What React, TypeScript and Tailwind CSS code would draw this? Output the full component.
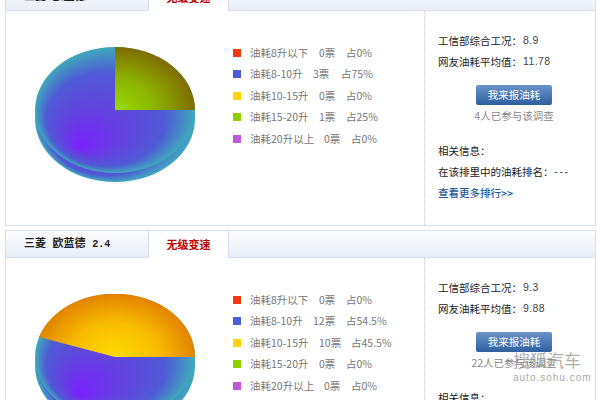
const CJK = "font-['Noto_Sans_CJK_SC','Liberation_Sans',sans-serif]";
const NUM = "font-['Liberation_Sans',sans-serif] text-[10.5px] tracking-[0.4px] text-[#444]";

type Row = { color: string; label: string; votes: string; pct: string; g1: string; g2: string };

const rows1: Row[] = [
  { color: "bg-[#f23a10]", label: "油耗8升以下", votes: "0票", pct: "占0%", g1: "w-[69px]", g2: "w-[27px]" },
  { color: "bg-[#4c5fd8]", label: "油耗8-10升", votes: "3票", pct: "占75%", g1: "w-[63px]", g2: "w-[28px]" },
  { color: "bg-[#ffd200]", label: "油耗10-15升", votes: "0票", pct: "占0%", g1: "w-[69px]", g2: "w-[27px]" },
  { color: "bg-[#8fd000]", label: "油耗15-20升", votes: "1票", pct: "占25%", g1: "w-[69px]", g2: "w-[27px]" },
  { color: "bg-[#c458dc]", label: "油耗20升以上", votes: "0票", pct: "占0%", g1: "w-[74px]", g2: "w-[27px]" },
];
const rows2: Row[] = [
  { color: "bg-[#f23a10]", label: "油耗8升以下", votes: "0票", pct: "占0%", g1: "w-[69px]", g2: "w-[27px]" },
  { color: "bg-[#4c5fd8]", label: "油耗8-10升", votes: "12票", pct: "占54.5%", g1: "w-[63px]", g2: "w-[33px]" },
  { color: "bg-[#ffd200]", label: "油耗10-15升", votes: "10票", pct: "占45.5%", g1: "w-[69px]", g2: "w-[32px]" },
  { color: "bg-[#8fd000]", label: "油耗15-20升", votes: "0票", pct: "占0%", g1: "w-[69px]", g2: "w-[27px]" },
  { color: "bg-[#c458dc]", label: "油耗20升以上", votes: "0票", pct: "占0%", g1: "w-[74px]", g2: "w-[27px]" },
];

function Defs({ id }: { id: string }) {
  return (
    <defs>
      <radialGradient id={`${id}b`} cx="0.5" cy="0.5" r="0.5" fx="0.27" fy="0.8">
        <stop offset="0" stopColor="#7a22fc" />
        <stop offset="0.4" stopColor="#6244de" />
        <stop offset="0.74" stopColor="#4f5ad6" />
        <stop offset="1" stopColor="#3fa8bc" />
      </radialGradient>
      <radialGradient id={`${id}g`} gradientUnits="userSpaceOnUse" cx="0" cy="0" r="1" gradientTransform="translate(81 63) scale(80 63)">
        <stop offset="0" stopColor="#98dc00" />
        <stop offset="0.5" stopColor="#8cb400" />
        <stop offset="1" stopColor="#806c00" />
      </radialGradient>
      <radialGradient id={`${id}y`} gradientUnits="userSpaceOnUse" cx="0" cy="0" r="1" gradientTransform="translate(81 63) scale(80 63)">
        <stop offset="0" stopColor="#ffdc00" />
        <stop offset="0.55" stopColor="#f8bc00" />
        <stop offset="1" stopColor="#e28400" />
      </radialGradient>
    </defs>
  );
}

function Pie({ id, kind }: { id: string; kind: "a" | "b" }) {
  return (
    <svg width="162" height="136" viewBox="0 0 162 136" className="block">
      <Defs id={id} />
      <ellipse cx="81" cy="72" rx="80" ry="63" fill={`url(#${id}b)`} />
      <ellipse cx="81" cy="63" rx="80" ry="63" fill={`url(#${id}b)`} />
      {kind === "a" ? (
        <path d="M81 63 V0 A80 63 0 0 1 161 63 Z" fill={`url(#${id}g)`} />
      ) : (
        <path d="M81 63 H161 A80 63 0 0 0 5 43 Z" fill={`url(#${id}y)`} />
      )}
    </svg>
  );
}

function Card({ title, ver, rows, kind, id, a, b, count, top }: { title: string; ver: string; rows: Row[]; kind: "a" | "b"; id: string; a: string; b: string; count: string; top: string }) {
  return (
    <section className={`${top} mx-[5px] w-[591px] shrink-0 border border-[#d5e0f0] bg-white flex flex-col`}>
      <div className="h-[27px] shrink-0 flex bg-gradient-to-b from-[#fdfdff] to-[#e8edf7] border-b border-[#d6deef]">
        <div className="w-[143px] border-r border-[#d0d8e8] pl-[18px] pt-px flex items-center font-['Liberation_Mono','Noto_Sans_CJK_SC',monospace] font-bold text-[11px] text-[#222] whitespace-pre">
          {title} <span className="text-[10px]">{ver}</span>
        </div>
        <div className="w-[80px] -mb-px bg-white border-r border-[#d6deef] flex items-center justify-center text-[11px] font-bold text-[#c00000] font-['Noto_Sans_CJK_SC',sans-serif]">
          无级变速
        </div>
      </div>
      <div className="flex-1 flex min-h-0">
        <div className="w-[418px] shrink-0 flex pt-[36px] pl-[28px]">
          <Pie id={id} kind={kind} />
          <div className={`ml-[37px] mt-[-5px] flex flex-col text-[10.5px] text-[#777] ${CJK}`}>
            {rows.map((r) => (
              <div key={r.label} className="h-[21.5px] flex items-center">
                <span className={`w-2 h-2 mr-[9px] ${r.color}`} />
                <span className={r.g1}>{r.label}</span>
                <span className={r.g2}>{r.votes}</span>
                <span>{r.pct}</span>
              </div>
            ))}
          </div>
        </div>
        <div className={`flex-1 border-l border-dotted border-[#cfcfcf] pl-[13px] pt-[19px] text-[10.5px] text-[#222] ${CJK}`}>
          <div className="h-[21px] flex items-center">工信部综合工况：<span className={`ml-px ${NUM}`}>{a}</span></div>
          <div className="h-[21px] flex items-center">网友油耗平均值：<span className={`ml-px ${NUM}`}>{b}</span></div>
          <div className="mt-[13px] ml-[38px] w-[76px] h-[20px] rounded-[2px] bg-gradient-to-b from-[#6a93c9] to-[#2e5f9f] text-white text-[10.5px] flex items-center justify-center">
            我来报油耗
          </div>
          <div className="w-[152px] mt-[1px] h-[20px] flex items-center justify-center text-[#888]">{count}</div>
          <div className="h-[21px] mt-[14px] flex items-center">相关信息：</div>
          <div className="h-[21px] flex items-center">在该排里中的油耗排名：<span className="ml-px font-['Liberation_Sans',sans-serif] text-[10.5px] tracking-[1.5px] text-[#444]">---</span></div>
          <div className="h-[21px] flex items-center text-[#1f5c9e] font-medium">查看更多排行&gt;&gt;</div>
        </div>
      </div>
    </section>
  );
}

export default function App() {
  return (
    <div className="relative w-[600px] h-[400px] overflow-hidden bg-white flex flex-col gap-[4px]">
      <Card top="-mt-[17px] h-[243px]" title="三菱 欧蓝德" ver="2.0" rows={rows1} kind="a" id="p1" a="8.9" b="11.78" count="4人已参与该调查" />
      <Card top="h-[243px]" title="三菱 欧蓝德" ver="2.4" rows={rows2} kind="b" id="p2" a="9.3" b="9.88" count="22人已参与该调查" />
      <div className="absolute left-[513px] top-[350px] text-[#8a8a8a]/70 font-['Noto_Sans_CJK_SC',sans-serif]">
        <div className="text-[17px] leading-[20px] whitespace-nowrap">搜狐汽车</div>
        <div className="mt-[2px] text-[10px] leading-[11px] tracking-[1px] font-['Liberation_Sans',sans-serif] text-[#aaa] whitespace-nowrap">auto.sohu.com</div>
      </div>
    </div>
  );
}
